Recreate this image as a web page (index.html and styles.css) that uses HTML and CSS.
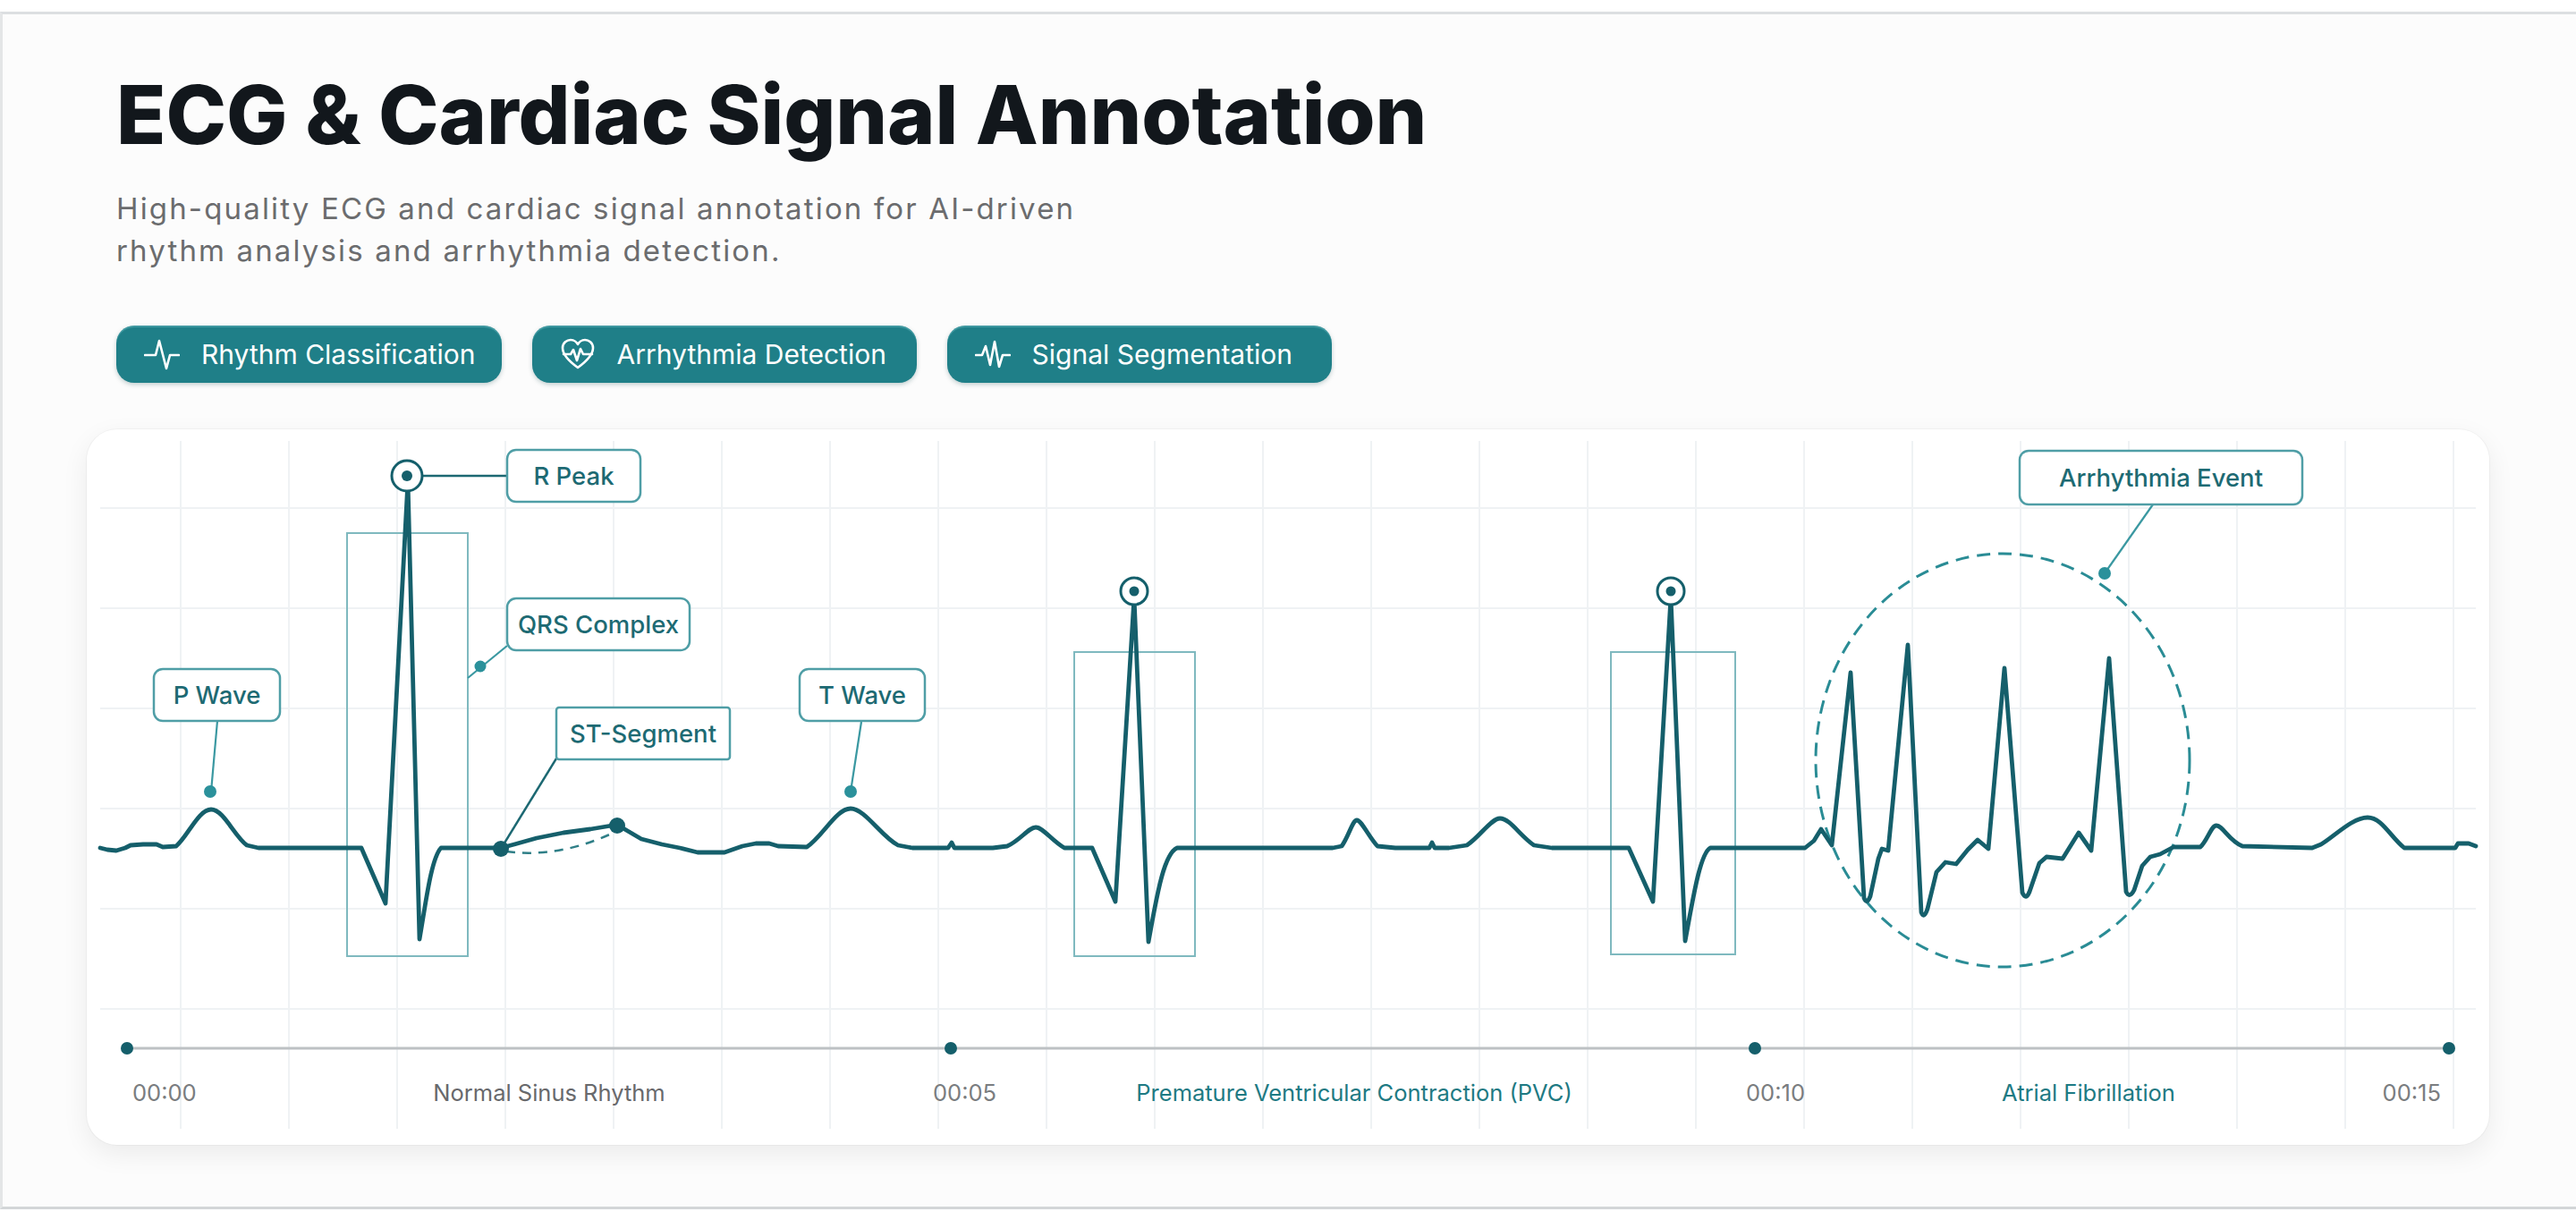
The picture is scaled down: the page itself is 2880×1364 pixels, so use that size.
FILE: index.html
```html
<!DOCTYPE html>
<html lang="en">
<head>
<meta charset="utf-8">
<title>ECG &amp; Cardiac Signal Annotation</title>
<link rel="stylesheet" href="styles.css">
</head>
<body>
<div class="frame">
  <header class="intro">
    <h1 class="title">ECG &amp; Cardiac Signal Annotation</h1>
    <p class="subtitle">High-quality ECG and cardiac signal annotation for AI-driven<br>rhythm analysis and arrhythmia detection.</p>
    <div class="tags">
      <span class="tag">
        <svg class="tag-icon" viewBox="0 0 40 40"><polyline points="1,21 13,21 17,5 25,36 29,21 39,21"/></svg>
        <span class="tag-text">Rhythm Classification</span>
      </span>
      <span class="tag">
        <svg class="tag-icon" viewBox="0 0 40 40"><path d="M20 35 C 9 27, 3 20, 3 13 C 3 7, 8 4, 12 4 C 16 4, 19 7, 20 9 C 21 7, 24 4, 28 4 C 32 4, 37 7, 37 13 C 37 20, 31 27, 20 35 Z"/><polyline points="4,20 12,20 15,15 19,27 23,14 26,20 36,20"/></svg>
        <span class="tag-text">Arrhythmia Detection</span>
      </span>
      <span class="tag">
        <svg class="tag-icon" viewBox="0 0 40 40"><polyline points="1,21 8,21 12,11 17,32 22,6 27,34 31,21 39,21"/></svg>
        <span class="tag-text">Signal Segmentation</span>
      </span>
    </div>
  </header>

  <section class="card">
    <svg class="chart" viewBox="97 480 2686 800" preserveAspectRatio="none">
      <g class="grid">
        <line x1="202" y1="493" x2="202" y2="1262"/><line x1="323" y1="493" x2="323" y2="1262"/>
        <line x1="444" y1="493" x2="444" y2="1262"/><line x1="565" y1="493" x2="565" y2="1262"/>
        <line x1="686" y1="493" x2="686" y2="1262"/><line x1="807" y1="493" x2="807" y2="1262"/>
        <line x1="928" y1="493" x2="928" y2="1262"/><line x1="1049" y1="493" x2="1049" y2="1262"/>
        <line x1="1170" y1="493" x2="1170" y2="1262"/><line x1="1291" y1="493" x2="1291" y2="1262"/>
        <line x1="1412" y1="493" x2="1412" y2="1262"/><line x1="1533" y1="493" x2="1533" y2="1262"/>
        <line x1="1654" y1="493" x2="1654" y2="1262"/><line x1="1775" y1="493" x2="1775" y2="1262"/>
        <line x1="1896" y1="493" x2="1896" y2="1262"/><line x1="2017" y1="493" x2="2017" y2="1262"/>
        <line x1="2138" y1="493" x2="2138" y2="1262"/><line x1="2259" y1="493" x2="2259" y2="1262"/>
        <line x1="2380" y1="493" x2="2380" y2="1262"/><line x1="2501" y1="493" x2="2501" y2="1262"/>
        <line x1="2622" y1="493" x2="2622" y2="1262"/><line x1="2743" y1="493" x2="2743" y2="1262"/>
        <line x1="112" y1="568" x2="2768" y2="568"/><line x1="112" y1="680" x2="2768" y2="680"/>
        <line x1="112" y1="792" x2="2768" y2="792"/><line x1="112" y1="904" x2="2768" y2="904"/>
        <line x1="112" y1="1016" x2="2768" y2="1016"/><line x1="112" y1="1128" x2="2768" y2="1128"/>
      </g>

      <rect class="qrs-box" x="388" y="596" width="135" height="473"/>
      <rect class="qrs-box" x="1201" y="729" width="135" height="340"/>
      <rect class="qrs-box" x="1801" y="729" width="139" height="338"/>

      <ellipse class="event-ring" cx="2239" cy="850" rx="209" ry="231"/>

      <path class="st-dash" d="M566 952 Q 625 960 688 930"/>

      <path class="ecg" d="M112 948 L120 950 L130 951 L140 948 L146 945 L160 944 L175 944 L182 947 L197 946
        C 210 935, 222 905, 236 905 C 250 905, 262 935, 276 945 L289 948 L404 948
        L431 1010 L456 538 L469 1050 C 476 1010, 482 960, 493 948 L560 948
        L575 944 L600 937 L630 931 L660 927 L690 922 L700 928 L717 938 L740 944 L760 948 L780 953 L810 953
        L830 946 L845 943 L860 943 L870 946 L902 947
        C 920 935, 935 904, 951 904 C 967 904, 985 935, 1004 945 L1020 948 L1060 948 L1064 942 L1067 948
        L1110 948 L1126 946 C 1140 940, 1150 925, 1158 925 C 1166 925, 1176 940, 1190 948 L1221 948
        L1247 1008 L1268 668 L1284 1053 C 1292 1010, 1300 955, 1316 948 L1490 948
        L1500 946 C 1508 935, 1512 917, 1517 917 C 1522 917, 1530 935, 1540 946 L1560 948 L1598 948 L1601 942 L1604 948
        L1620 948 L1640 945 C 1655 935, 1667 915, 1677 915 C 1688 915, 1700 935, 1715 945 L1735 948 L1821 948
        L1848 1008 L1868 668 L1884 1052 C 1892 1010, 1900 955, 1912 948 L2018 948
        L2028 940 L2036 927 L2048 945 L2069 752 L2084 1004 Q 2087 1012 2091 1002 L2100 960 L2104 949 L2111 951
        L2133 721 L2148 1020 Q 2151 1028 2155 1016 L2165 975 L2175 964 L2187 966 L2200 950 L2211 939 L2223 949
        L2241 747 L2261 998 Q 2265 1007 2269 997 L2280 965 L2288 958 L2306 960 L2324 931 L2338 951
        L2358 736 L2377 997 Q 2381 1005 2386 995 L2395 968 L2404 958 L2415 955 L2430 947
        L2460 947 C 2468 940, 2472 923, 2478 923 C 2485 923, 2492 940, 2507 946 L2585 948
        L2595 944 C 2610 935, 2630 914, 2647 914 C 2663 914, 2672 935, 2688 948 L2745 948 L2748 943 L2760 943 L2768 946"/>

      <!-- connectors -->
      <line class="conn-dark" x1="472" y1="532" x2="567" y2="532"/>
      <line class="conn" x1="523" y1="758" x2="567" y2="722"/>
      <line class="conn" x1="243" y1="806" x2="236" y2="885"/>
      <line class="conn-dark" x1="622" y1="848" x2="560" y2="949"/>
      <line class="conn" x1="963" y1="807" x2="951" y2="885"/>
      <line class="conn" x1="2407" y1="564" x2="2353" y2="641"/>

      <!-- markers -->
      <circle class="ring" cx="455" cy="532" r="17"/>
      <circle class="dot-dark" cx="455" cy="532" r="6"/>
      <circle class="ring" cx="1268" cy="661" r="15"/>
      <circle class="dot-dark" cx="1268" cy="661" r="5.5"/>
      <circle class="ring" cx="1868" cy="661" r="15"/>
      <circle class="dot-dark" cx="1868" cy="661" r="5.5"/>
      <circle class="dot" cx="537" cy="745" r="6.5"/>
      <circle class="dot" cx="235" cy="885" r="7"/>
      <circle class="dot" cx="951" cy="885" r="7"/>
      <circle class="dot" cx="2353" cy="641" r="7"/>
      <circle class="dot-dark" cx="560" cy="949" r="9"/>
      <circle class="dot-dark" cx="690" cy="923" r="9"/>

      <!-- labels -->
      <rect class="label-box" x="567" y="503" width="149" height="58" rx="10"/>
      <text class="label-text" x="641.5" y="542">R Peak</text>
      <rect class="label-box" x="567" y="669" width="204" height="58" rx="10"/>
      <text class="label-text" x="669" y="708">QRS Complex</text>
      <rect class="label-box" x="172" y="748" width="141" height="58" rx="10"/>
      <text class="label-text" x="242.5" y="787">P Wave</text>
      <rect class="label-box" x="622" y="791" width="194" height="58" rx="3"/>
      <text class="label-text" x="719" y="830">ST-Segment</text>
      <rect class="label-box" x="894" y="748" width="140" height="58" rx="10"/>
      <text class="label-text" x="964" y="787">T Wave</text>
      <rect class="label-box" x="2258" y="504" width="316" height="60" rx="10"/>
      <text class="label-text" x="2416" y="544">Arrhythmia Event</text>

      <!-- timeline -->
      <line class="track" x1="142" y1="1172" x2="2738" y2="1172"/>
      <circle class="dot-dark" cx="142" cy="1172" r="7"/>
      <circle class="dot-dark" cx="1063" cy="1172" r="7"/>
      <circle class="dot-dark" cx="1962" cy="1172" r="7"/>
      <circle class="dot-dark" cx="2738" cy="1172" r="7"/>
      <text class="time" x="148" y="1231">00:00</text>
      <text class="phase" x="614" y="1231">Normal Sinus Rhythm</text>
      <text class="time" x="1043" y="1231">00:05</text>
      <text class="phase phase-teal" x="1514" y="1231">Premature Ventricular Contraction (PVC)</text>
      <text class="time" x="1952" y="1231">00:10</text>
      <text class="phase phase-teal" x="2335" y="1231">Atrial Fibrillation</text>
      <text class="time time-end" x="2729" y="1231">00:15</text>
    </svg>
  </section>
</div>
</body>
</html>
```

FILE: styles.css
```css
* { box-sizing: border-box; }

html, body {
  margin: 0;
  padding: 0;
  background: #ffffff;
}

body {
  font-family: Inter, "Noto Sans", "Liberation Sans", sans-serif;
  color: #13181d;
  width: 2880px;
  height: 1364px;
  overflow: hidden;
}

.frame {
  margin-top: 13px;
  border-top: 3px solid #dcdfe1;
  border-left: 3px solid #e4e6e7;
  border-bottom: 3px solid #d3d6d8;
  background: #fcfcfc;
}

.intro {
  padding: 57px 0 0 127px;
}

.title {
  margin: 0;
  font-size: 91px;
  line-height: 110px;
  font-weight: 800;
  letter-spacing: -0.1px;
  color: #12171c;
}

.subtitle {
  margin: 26.5px 0 0;
  font-size: 33px;
  line-height: 47px;
  font-weight: 400;
  color: #6b6c6e;
  letter-spacing: 2.15px;
}

.tags {
  display: flex;
  gap: 34px;
  margin-top: 60.5px;
}

.tag {
  display: flex;
  align-items: center;
  gap: 24px;
  min-width: 430px;
  height: 64px;
  padding: 0 29px 0 31px;
  border-radius: 20px;
  background: #1f7f88;
  box-shadow: 0 2px 5px rgba(20, 70, 75, 0.25), inset 0 2px 0 rgba(120, 200, 205, 0.35);
  color: #ffffff;
}

.tag-icon {
  width: 40px;
  height: 40px;
  flex: none;
  fill: none;
  stroke: #ffffff;
  stroke-width: 2.6;
  stroke-linejoin: round;
  stroke-linecap: round;
}

.tag-text {
  font-size: 30px;
  font-weight: 400;
  line-height: 1;
}

.card {
  margin: 52px 0 69px 94px;
  width: 2686px;
  height: 800px;
  background: #ffffff;
  border-radius: 34px;
  box-shadow: 0 10px 30px rgba(0, 0, 0, 0.07), 0 0 0 1px rgba(0, 0, 0, 0.03);
  overflow: hidden;
}

.chart {
  display: block;
  width: 2686px;
  height: 800px;
}

.grid line {
  stroke: #eff2f4;
  stroke-width: 2;
}

.qrs-box {
  fill: none;
  stroke: #7fb9bf;
  stroke-width: 2;
}

.event-ring {
  fill: none;
  stroke: #2a8c95;
  stroke-width: 3;
  stroke-dasharray: 15 9;
}

.st-dash {
  fill: none;
  stroke: #2f7f87;
  stroke-width: 2.5;
  stroke-dasharray: 10 8;
}

.ecg {
  fill: none;
  stroke: #155f6b;
  stroke-width: 4.8;
  stroke-linejoin: round;
  stroke-linecap: round;
}

.conn {
  stroke: #3a98a1;
  stroke-width: 2.2;
}

.conn-dark {
  stroke: #1c6872;
  stroke-width: 2.4;
}

.ring {
  fill: #ffffff;
  stroke: #145f6b;
  stroke-width: 3;
}

.dot-dark {
  fill: #155f6b;
}

.dot {
  fill: #2b919b;
}

.label-box {
  fill: #ffffff;
  stroke: #4f9ea6;
  stroke-width: 2.5;
}

.label-text {
  font-family: Inter, "Noto Sans", "Liberation Sans", sans-serif;
  font-size: 27.5px;
  font-weight: 500;
  fill: #1d6a73;
  text-anchor: middle;
}

.track {
  stroke: #bdc1c4;
  stroke-width: 3;
}

.time {
  font-family: Inter, "Noto Sans", "Liberation Sans", sans-serif;
  font-size: 25.5px;
  fill: #7a7d80;
}

.time-end {
  text-anchor: end;
}

.phase {
  font-family: Inter, "Noto Sans", "Liberation Sans", sans-serif;
  font-size: 25.5px;
  fill: #68696c;
  text-anchor: middle;
}

.phase-teal {
  fill: #1e7a83;
}
```
